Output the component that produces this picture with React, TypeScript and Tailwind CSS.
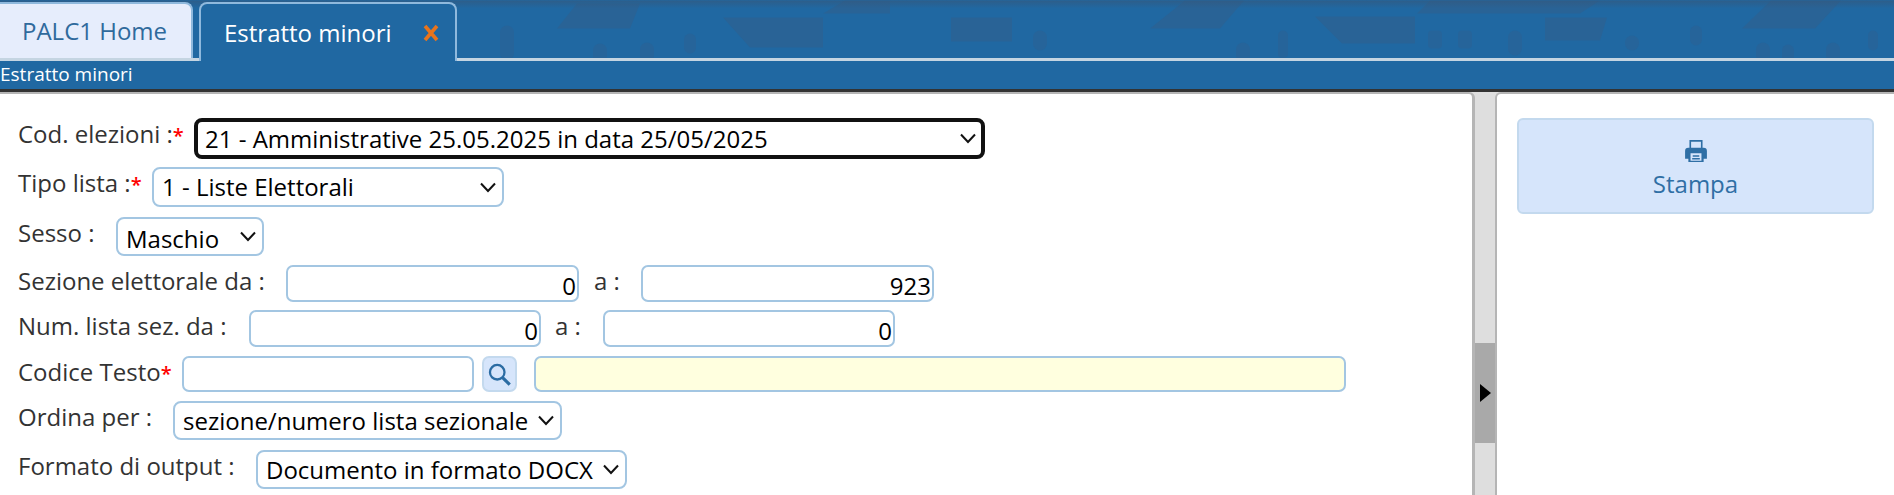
const labelCls = 'shrink-0 text-[24px] leading-[32px] text-[#333]';
const fieldCls = 'h-full rounded-[7px] border-2 border-[#a3c6e2] px-2 text-[24px] text-black outline-none';

function Star() {
  return <span className="text-[20px] font-semibold text-[#f00]">*</span>;
}

function Dropdown({ value, width, focused, textClass }: { value: string; width: string; focused?: boolean; textClass?: string }) {
  return (
    <div
      className={`flex h-full items-center justify-between bg-white text-[24px] text-black ${width} ${
        focused ? 'rounded-[8px] border-[4px] border-[#111] pr-[5px] pl-[7px]' : 'rounded-[8px] border-2 border-[#a3c6e2] pr-[6px] pl-[8px]'
      }`}
    >
      <span className={`whitespace-nowrap ${textClass ?? ''}`}>{value}</span>
      <svg width="16" height="11" viewBox="0 0 16 11" fill="none" stroke="#111" strokeWidth="2" className="shrink-0">
        <path d="M1 1.5 L8 9 L15 1.5" />
      </svg>
    </div>
  );
}

function Row({ children, className }: { children: React.ReactNode; className: string }) {
  return <div className={`flex items-start ${className}`}>{children}</div>;
}

function NumInput({ value, width }: { value: string; width: string }) {
  return <input readOnly value={value} className={`${fieldCls} bg-white pt-[4px] pr-px text-right ${width}`} />;
}

function Banner() {
  return (
    <svg className="absolute inset-0 h-full w-full" viewBox="0 0 1894 60">
      <defs>
        <linearGradient id="fade" x1="0" y1="0" x2="0" y2="1">
          <stop offset="0" stopColor="#33597f" stopOpacity="0.7" />
          <stop offset="1" stopColor="#33597f" stopOpacity="0" />
        </linearGradient>
      </defs>
      <g fill="#296396">
        <polygon points="557,28 577,3 640,3 630,28" />
        <polygon points="723,17 823,17 823,47 750,47" />
        <polygon points="823,13 845,0 890,0 890,13" />
        <polygon points="951,17 1012,17 1012,41 951,41" />
        <polygon points="1150,28 1185,0 1200,0 1200,28" />
        <polygon points="1200,0 1244,0 1220,28 1200,28" />
        <polygon points="1315,16 1415,16 1415,43 1342,43" />
        <polygon points="1417,13 1430,0 1600,0 1580,13" />
        <polygon points="1545,17 1607,17 1600,40 1545,40" />
        <polygon points="1742,28 1771,0 1841,0 1815,28" />
      </g>
      <g fill="#26649a">
        <rect x="500" y="25" width="14" height="35" rx="7" />
        <rect x="593" y="43" width="14" height="20" rx="7" />
        <rect x="640" y="42" width="14" height="20" rx="7" />
        <rect x="684" y="33" width="12" height="20" rx="6" />
        <rect x="1033" y="30" width="14" height="20" rx="7" />
        <rect x="1236" y="42" width="14" height="20" rx="7" />
        <rect x="1278" y="30" width="10" height="28" rx="5" />
        <rect x="1428" y="30" width="14" height="18" rx="4" />
        <rect x="1458" y="30" width="14" height="18" rx="4" />
        <rect x="1508" y="30" width="14" height="25" rx="7" />
        <rect x="1625" y="35" width="14" height="15" rx="7" />
        <rect x="1690" y="25" width="12" height="20" rx="6" />
        <rect x="1756" y="42" width="14" height="20" rx="7" />
        <rect x="1782" y="44" width="12" height="20" rx="6" />
        <rect x="1826" y="42" width="14" height="20" rx="7" />
        <rect x="1868" y="30" width="10" height="20" rx="5" />
      </g>
      <rect width="1894" height="8" fill="url(#fade)" />
    </svg>
  );
}

export default function App() {
  return (
    <div className="flex h-[495px] w-[1894px] flex-col overflow-hidden bg-[#dedede] font-['Open_Sans',sans-serif]">
      <div className="relative h-[61px] shrink-0 bg-[#2068a2]">
        <Banner />
        <div className="relative flex h-full items-end gap-[6px] border-b-[3px] border-[#c5d5e2] pt-[2px]">
          <div className="flex h-[56px] w-[193px] items-center rounded-tr-[8px] border-2 border-b-0 border-l-0 border-[#8fb9dd] bg-[#e6edfc] pl-[22px] text-[24px] text-[#2f6a9c]">
            PALC1 Home
          </div>
          <div className="-mb-[3px] flex h-[59px] w-[258px] items-center rounded-t-[8px] border-2 border-b-0 border-[#8fb9dd] bg-[#2068a2] pl-[23px] text-[24px] text-white">
            Estratto minori
            <svg className="ml-[31px]" width="16" height="18" viewBox="0 0 16 18">
              <path d="M2 2 L14 16 M14 2 L2 16" stroke="#e8741c" strokeWidth="3.6" />
            </svg>
          </div>
        </div>
      </div>
      <div className="flex h-[31px] shrink-0 items-start border-b-[3px] border-[#333] bg-[#2068a2] text-[19px] leading-[27px] text-white">
        Estratto minori
      </div>
      <div className="flex min-h-0 flex-1">
        <div className="w-[1475px] rounded-tr-[6px] border-t-2 border-r-[3px] border-[#b5b5b5] bg-white pl-[18px]">
          <Row className="mt-[24px] h-[41px]">
            <span className={`${labelCls} w-[176px]`}>Cod. elezioni :<Star /></span>
            <Dropdown focused value="21 - Amministrative 25.05.2025 in data 25/05/2025" width="w-[791px]" />
          </Row>
          <Row className="mt-[8px] h-[40px]">
            <span className={`${labelCls} w-[134px]`}>Tipo lista :<Star /></span>
            <Dropdown value="1 - Liste Elettorali" width="w-[352px]" />
          </Row>
          <Row className="mt-[10px] h-[39px]">
            <span className={`${labelCls} w-[98px]`}>Sesso :</span>
            <Dropdown value="Maschio" width="w-[148px]" textClass="pt-[5px]" />
          </Row>
          <Row className="mt-[9px] h-[37px]">
            <span className={`${labelCls} w-[268px]`}>Sezione elettorale da :</span>
            <NumInput value="0" width="w-[293px]" />
            <span className={`${labelCls} w-[62px] pl-[15px]`}>a :</span>
            <NumInput value="923" width="w-[293px]" />
          </Row>
          <Row className="mt-[8px] h-[37px]">
            <span className={`${labelCls} w-[231px]`}>Num. lista sez. da :</span>
            <NumInput value="0" width="w-[292px]" />
            <span className={`${labelCls} w-[62px] pl-[14px]`}>a :</span>
            <NumInput value="0" width="w-[292px]" />
          </Row>
          <Row className="mt-[9px] h-[36px]">
            <span className={`${labelCls} w-[164px]`}>Codice Testo<Star /></span>
            <input readOnly className={`${fieldCls} w-[292px] bg-white`} />
            <div className="ml-[8px] flex h-full w-[35px] items-center justify-center rounded-[7px] border-2 border-[#c3d9ee] bg-[#d6e5fb]">
              <svg width="25" height="25" viewBox="0 0 22 22" fill="none" stroke="#2b6ca3">
                <circle cx="9" cy="9" r="6.4" strokeWidth="2" />
                <path d="M13.5 13.5 L20 20" strokeWidth="2.8" />
              </svg>
            </div>
            <input readOnly className={`${fieldCls} ml-[17px] w-[812px] bg-[#ffffdf]`} />
          </Row>
          <Row className="mt-[9px] h-[39px]">
            <span className={`${labelCls} w-[155px]`}>Ordina per :</span>
            <Dropdown value="sezione/numero lista sezionale" width="w-[389px]" />
          </Row>
          <Row className="mt-[10px] h-[39px]">
            <span className={`${labelCls} w-[238px]`}>Formato di output :</span>
            <Dropdown value="Documento in formato DOCX" width="w-[371px]" />
          </Row>
        </div>
        <div className="flex w-[20px] shrink-0 flex-col pt-[251px]">
          <div className="flex h-[100px] items-center justify-center bg-[#a9a9a9]">
            <div className="h-0 w-0 border-y-[9px] border-l-[11px] border-y-transparent border-l-black" />
          </div>
        </div>
        <div className="flex-1 rounded-tl-[6px] border-t-2 border-l-[2px] border-[#b5b5b5] bg-white px-[20px] pt-[24px]">
          <div className="flex h-[96px] flex-col items-center justify-center rounded-[6px] border-2 border-[#c3d9ee] bg-[#d6e5fb] pt-[8px] text-[24px] text-[#2f6fa5]">
            <svg width="24" height="24" viewBox="0 0 22 22" fill="#2f6fa5">
              <path d="M5 1h12v7H5z M1 11q0-3 3-3h14q3 0 3 3v7h-3v3H4v-3H1z" />
              <path d="M6.5 2.5h9V8h-9z M6 13h10v7H6z" fill="#d6e5fb" />
              <path d="M8 15h6v1.3H8z M7.5 17.5h7v1.3h-7z" />
            </svg>
            <span className="mt-[3px] leading-[36px]">Stampa</span>
          </div>
        </div>
      </div>
    </div>
  );
}
